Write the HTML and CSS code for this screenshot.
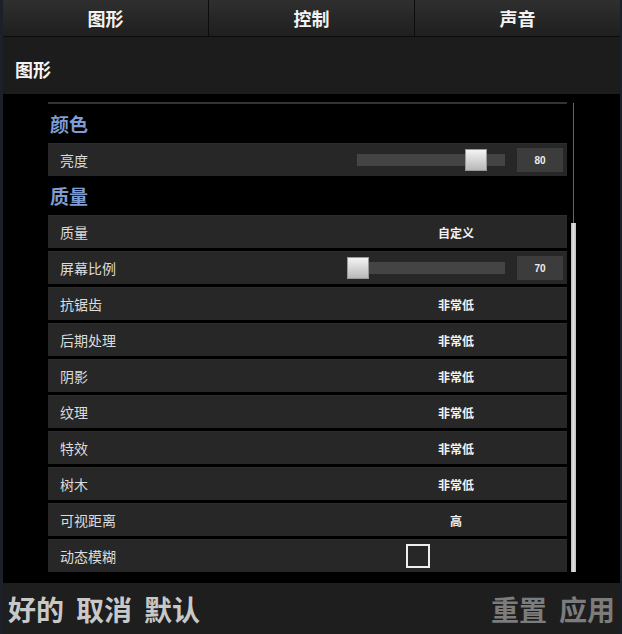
FILE: index.html
```html
<!DOCTYPE html>
<html lang="zh">
<head>
    <meta charset="UTF-8">
    <meta name="viewport" content="width=device-width, initial-scale=1.0">
    <title>设置 - 图形</title>
    <link rel="stylesheet" href="styles.css">
</head>
<body>
    <div class="window">
        <nav class="tabs">
            <div class="tab">图形</div>
            <div class="tab">控制</div>
            <div class="tab">声音</div>
        </nav>

        <header class="page-title">图形</header>

        <main class="content">
            <div class="list">
                <div class="divider"></div>

                <h3 class="section-title">颜色</h3>
                <div class="row slider-row">
                    <span class="label">亮度</span>
                    <div class="track track-short">
                        <div class="thumb" style="left: 108px;"></div>
                    </div>
                    <div class="value-box">80</div>
                </div>

                <h3 class="section-title">质量</h3>
                <div class="row">
                    <span class="label">质量</span>
                    <span class="value">自定义</span>
                </div>
                <div class="row slider-row">
                    <span class="label">屏幕比例</span>
                    <div class="track track-long">
                        <div class="thumb" style="left: 0px;"></div>
                    </div>
                    <div class="value-box">70</div>
                </div>
                <div class="row">
                    <span class="label">抗锯齿</span>
                    <span class="value">非常低</span>
                </div>
                <div class="row">
                    <span class="label">后期处理</span>
                    <span class="value">非常低</span>
                </div>
                <div class="row">
                    <span class="label">阴影</span>
                    <span class="value">非常低</span>
                </div>
                <div class="row">
                    <span class="label">纹理</span>
                    <span class="value">非常低</span>
                </div>
                <div class="row">
                    <span class="label">特效</span>
                    <span class="value">非常低</span>
                </div>
                <div class="row">
                    <span class="label">树木</span>
                    <span class="value">非常低</span>
                </div>
                <div class="row">
                    <span class="label">可视距离</span>
                    <span class="value">高</span>
                </div>
                <div class="row">
                    <span class="label">动态模糊</span>
                    <span class="checkbox"></span>
                </div>
            </div>

            <div class="scrollbar">
                <div class="scroll-thumb"></div>
            </div>
        </main>

        <footer class="actions">
            <div class="action-group">
                <span class="action">好的</span>
                <span class="action">取消</span>
                <span class="action">默认</span>
            </div>
            <div class="action-group">
                <span class="action disabled">重置</span>
                <span class="action disabled">应用</span>
            </div>
        </footer>
    </div>
</body>
</html>
```

FILE: styles.css
```css
* {
    box-sizing: border-box;
}

body {
    margin: 0;
    background: #1d2028;
    font-family: 'Noto Sans CJK SC', 'Noto Sans', sans-serif;
    color: #e6e6e6;
}

.window {
    width: 617px;
    height: 634px;
    margin-left: 3px;
    display: flex;
    flex-direction: column;
    background: #000;
}

.tabs {
    display: flex;
    height: 37px;
    border-bottom: 1px solid #0c0c0c;
}

.tab {
    flex: 1;
    display: flex;
    align-items: center;
    justify-content: center;
    background: linear-gradient(#2f2f2f, #1f1f1f);
    border-right: 1px solid #0c0c0c;
    font-size: 18px;
    font-weight: bold;
    color: #f2f2f2;
    padding-bottom: 1px;
}

.tab:last-child {
    border-right: none;
}

.page-title {
    height: 57px;
    display: flex;
    align-items: center;
    padding: 6px 0 0 12px;
    background: #1c1c1c;
    font-size: 18px;
    font-weight: bold;
    color: #f4f4f4;
}

.content {
    flex: 1;
    display: flex;
    overflow: hidden;
}

.list {
    width: 519px;
    margin-left: 45px;
    padding-top: 8px;
}

.divider {
    height: 2px;
    background: #333;
}

.section-title {
    margin: 0;
    height: 39px;
    display: flex;
    align-items: center;
    padding-left: 2px;
    font-size: 19px;
    font-weight: bold;
    color: #7f9dd3;
}

.row + .section-title {
    margin-top: -3px;
}

.row {
    height: 33px;
    margin-bottom: 3px;
    display: flex;
    align-items: center;
    padding: 0 4px 0 12px;
    background: #272727;
    border-top: 1px solid #2d2d2d;
}

.label {
    flex: 1;
    font-size: 14px;
    color: #dcdcdc;
}

.value {
    width: 112px;
    margin-right: 51px;
    text-align: center;
    font-size: 12px;
    font-weight: bold;
    color: #f2f2f2;
}

.checkbox {
    width: 24px;
    height: 24px;
    margin-right: 133px;
    border: 2px solid #eee;
}

.track {
    position: relative;
    height: 12px;
    background: #444;
    margin-right: 12px;
}

.track-short {
    width: 148px;
}

.track-long {
    width: 158px;
}

.thumb {
    position: absolute;
    top: -5px;
    width: 22px;
    height: 22px;
    background: linear-gradient(#f4f4f4, #b8b8b8);
    border: 1px solid #999;
}

.value-box {
    width: 46px;
    height: 24px;
    display: flex;
    align-items: center;
    justify-content: center;
    background: #3c3c3c;
    font-family: 'Liberation Sans', sans-serif;
    font-size: 10px;
    font-weight: bold;
    color: #eee;
}

.scrollbar {
    width: 5px;
    margin-left: 4px;
    margin-top: 9px;
    height: 469px;
    display: flex;
    flex-direction: column;
    background: linear-gradient(to right, transparent 2px, #666 2px, #666 3px, transparent 3px);
}

.scroll-thumb {
    margin-top: 120px;
    flex: 1;
    background: linear-gradient(to right, #bbb, #e0e0e0, #bbb);
}

.actions {
    height: 51px;
    display: flex;
    align-items: center;
    justify-content: space-between;
    padding: 0 5px;
    background: #1e1e1e;
}

.action-group {
    display: flex;
    gap: 12px;
}

.action {
    font-size: 28px;
    font-weight: bold;
    color: #c8c8c8;
    line-height: 1;
}

.action.disabled {
    color: #7c7c7c;
}
```
